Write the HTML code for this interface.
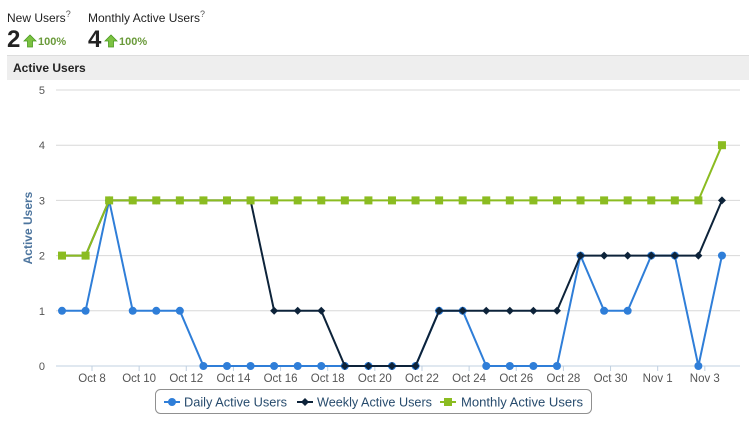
<!DOCTYPE html>
<html><head><meta charset="utf-8"><style>
body{margin:0;width:749px;height:426px;background:#fff;font-family:"Liberation Sans",sans-serif;overflow:hidden;position:relative}
.lbl{position:absolute;top:9px;font-size:12px;color:#222}
.lbl sup{font-size:9px;color:#555}
.num{position:absolute;top:26px;font-size:24px;font-weight:bold;color:#222}
.pct{position:absolute;top:36px;font-size:11px;font-weight:bold;color:#6a9a3a}
.bar{position:absolute;left:7px;top:55px;width:742px;height:24px;background:#eee;border-top:1px solid #ddd;font-size:12px;font-weight:bold;color:#222;line-height:24px;text-indent:6px}
svg{position:absolute;left:0;top:0}
</style></head><body>
<div class="lbl" style="left:7px">New Users<sup>?</sup></div>
<div class="lbl" style="left:88px">Monthly Active Users<sup>?</sup></div>
<div class="num" style="left:7px">2</div>
<div class="num" style="left:88px">4</div>
<svg width="749" height="426" style="pointer-events:none">
<path d="M24 41 l6-6 6 6 h-3.5 v6 h-5 v-6z" fill="#7cc242" stroke="#4a9a20" stroke-width="0.8"/>
<path d="M105 41 l6-6 6 6 h-3.5 v6 h-5 v-6z" fill="#7cc242" stroke="#4a9a20" stroke-width="0.8"/>
</svg>
<div class="pct" style="left:38px">100%</div>
<div class="pct" style="left:119px">100%</div>
<div class="bar">Active Users</div>
<svg id="c" width="749" height="426"></svg>
<script>
var s='',X=i=>62+23.57*i,Y=v=>366-55.2*v;
for(var v=0;v<=5;v++){s+='<line x1="56" x2="740" y1="'+Y(v)+'" y2="'+Y(v)+'" stroke="'+(v==0?'#c0d0e0':'#d8d8d8')+'"/>';s+='<text x="45" y="'+(Y(v)+4)+'" font-size="11" fill="#555" text-anchor="end">'+v+'</text>';}
var labs=['Oct 8','Oct 10','Oct 12','Oct 14','Oct 16','Oct 18','Oct 20','Oct 22','Oct 24','Oct 26','Oct 28','Oct 30','Nov 1','Nov 3'];
for(var k=0;k<14;k++){var x=92+47.14*k;s+='<line x1="'+x+'" x2="'+x+'" y1="366" y2="371" stroke="#c0d0e0"/><text x="'+x+'" y="382" font-size="11.5" fill="#555" text-anchor="middle">'+labs[k]+'</text>';}
s+='<text transform="translate(32,228) rotate(-90)" font-size="12" font-weight="bold" fill="#4d759e" text-anchor="middle">Active Users</text>';
var D=[1,1,3,1,1,1,0,0,0,0,0,0,0,0,0,0,1,1,0,0,0,0,2,1,1,2,2,0,2];
var W=[2,2,3,3,3,3,3,3,3,1,1,1,0,0,0,0,1,1,1,1,1,1,2,2,2,2,2,2,3];
var M=[2,2,3,3,3,3,3,3,3,3,3,3,3,3,3,3,3,3,3,3,3,3,3,3,3,3,3,3,4];
function line(a,c){return '<polyline fill="none" stroke="'+c+'" stroke-width="2" points="'+a.map((v,i)=>X(i)+','+Y(v)).join(' ')+'"/>';}
s+=line(D,'#2f7ed8');D.forEach((v,i)=>s+='<circle cx="'+X(i)+'" cy="'+Y(v)+'" r="4" fill="#2f7ed8"/>');
s+=line(W,'#0d233a');W.forEach((v,i)=>s+='<path d="M'+X(i)+' '+(Y(v)-4)+'l4 4-4 4-4-4z" fill="#0d233a"/>');
s+=line(M,'#8bbc21');M.forEach((v,i)=>s+='<rect x="'+(X(i)-4)+'" y="'+(Y(v)-4)+'" width="8" height="8" fill="#8bbc21"/>');
s+='<rect x="155.5" y="389.5" width="436" height="24" rx="5" fill="#fff" stroke="#909090"/>';
s+='<line x1="164" x2="180" y1="402" y2="402" stroke="#2f7ed8" stroke-width="2"/><circle cx="172" cy="402" r="4" fill="#2f7ed8"/><text x="184" y="406.5" font-size="13" fill="#274b6d" textLength="103" lengthAdjust="spacingAndGlyphs">Daily Active Users</text>';
s+='<line x1="297" x2="313" y1="402" y2="402" stroke="#0d233a" stroke-width="2"/><path d="M305 398l4 4-4 4-4-4z" fill="#0d233a"/><text x="317" y="406.5" font-size="13" fill="#274b6d" textLength="115" lengthAdjust="spacingAndGlyphs">Weekly Active Users</text>';
s+='<line x1="440" x2="456" y1="402" y2="402" stroke="#8bbc21" stroke-width="2"/><rect x="444" y="398" width="8" height="8" fill="#8bbc21"/><text x="461" y="406.5" font-size="13" fill="#274b6d" textLength="122" lengthAdjust="spacingAndGlyphs">Monthly Active Users</text>';
document.getElementById('c').innerHTML=s;
</script>
</body></html>
